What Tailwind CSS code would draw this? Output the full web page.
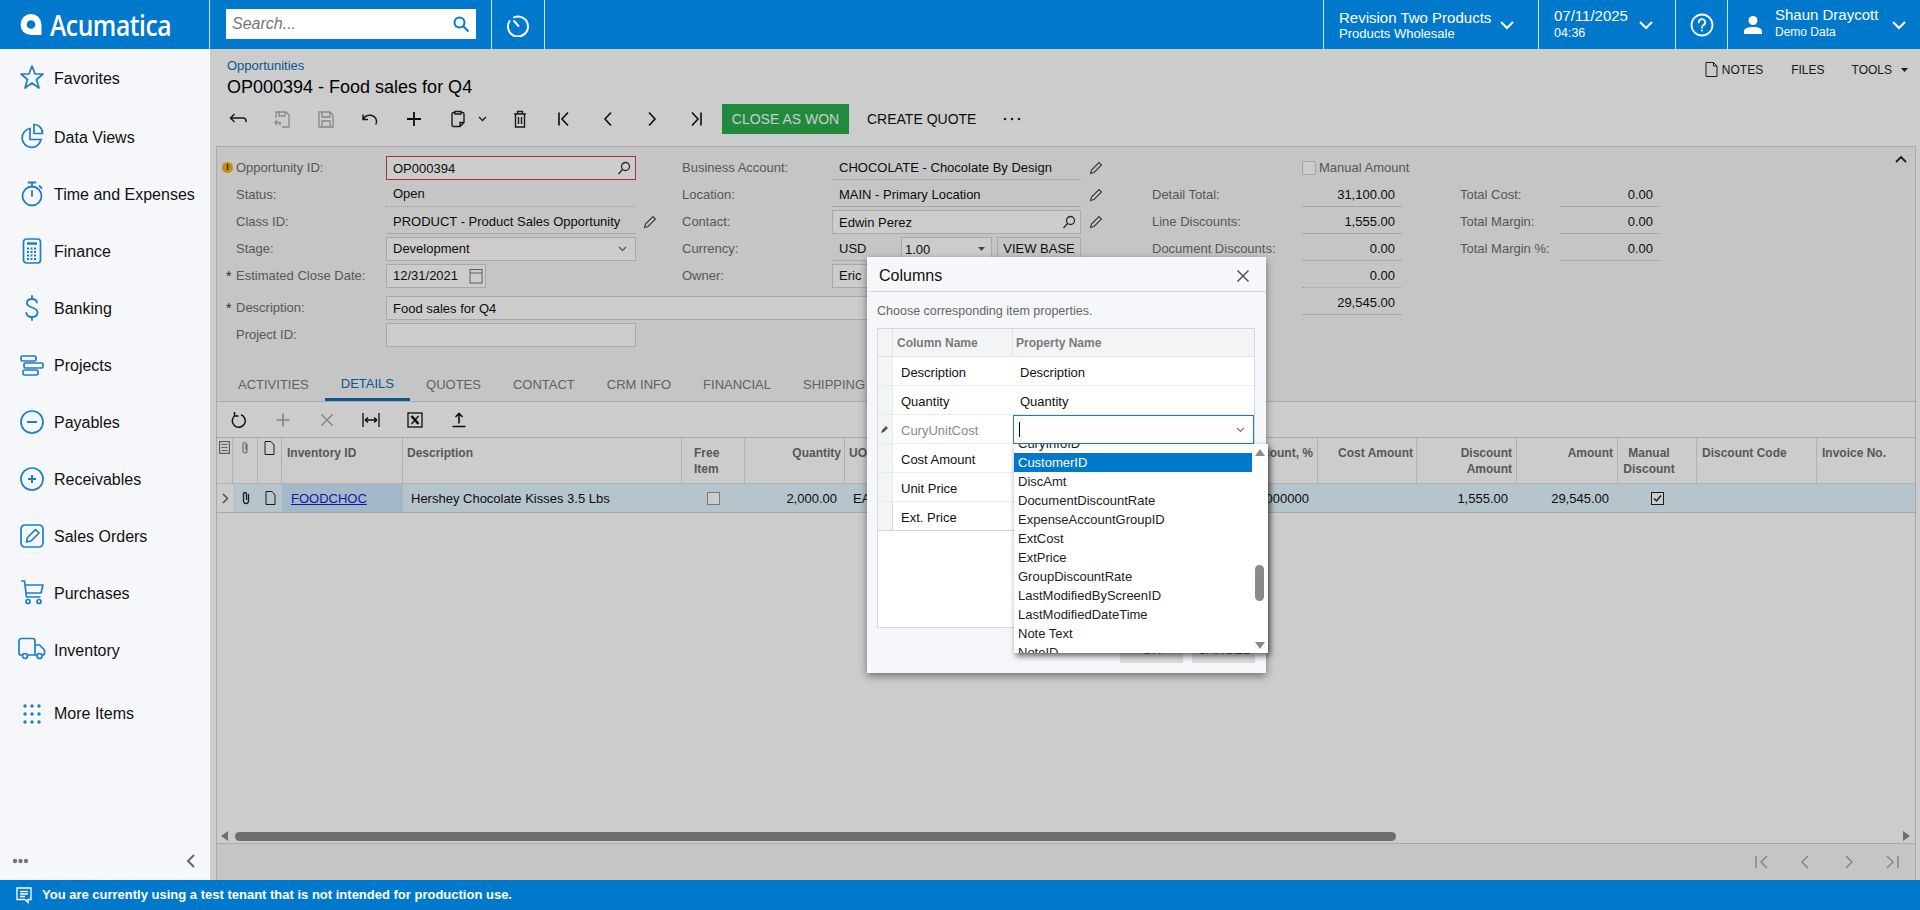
<!DOCTYPE html>
<html lang="en">
<head>
    <meta charset="UTF-8">
    <title>OP000394 - Food sales for Q4</title>
    <script src="https://cdn.jsdelivr.net/npm/@tailwindcss/browser@4"></script>
</head>
<body class="font-['Liberation_Sans',Arial,sans-serif] text-[#111]">
<div class="flex h-[910px] w-[1920px] flex-col overflow-hidden bg-white">

    <!-- top bar -->
    <header class="flex h-[49px] shrink-0 items-stretch bg-[#0079cc] text-white">
        <div class="flex w-[210px] items-center border-r border-white/80 pl-[20px]">
            <svg class="h-[23px] w-[22px]" viewBox="0 0 22 23"><path fill="#fff" fill-rule="evenodd" d="M11 1a10.500 10.500 0 0 1 10.500 10.500V22H11A10.500 10.500 0 0 1 11 1zm0 6.200a4.300 4.300 0 1 0 0 8.600 4.300 4.300 0 0 0 0-8.600z"/></svg>
            <span class="ml-[8px] origin-left scale-x-[.88] font-['Open_Sans',sans-serif] text-[28px] font-semibold tracking-[-0.5px]">Acumatica</span>
        </div>
        <div class="flex w-[282px] items-center border-r border-white/80 pl-[16px]">
            <div class="-mt-[1px] flex h-[30px] w-[250px] items-center justify-between bg-white pl-[6px] pr-[6px]">
                <span class="text-[16px] italic text-[#777]">Search...</span>
                <svg class="h-[18px] w-[18px]" viewBox="0 0 18 18" fill="none" stroke="#0079cc" stroke-width="2"><circle cx="7.500" cy="7.500" r="5"/><path d="M11.500 11.500l5 5"/></svg>
            </div>
        </div>
        <div class="flex w-[53px] items-center justify-center border-r border-white/80">
            <svg class="h-[24px] w-[24px]" viewBox="0 0 24 24" fill="none" stroke="#fff" stroke-width="2" stroke-linecap="round"><path d="M8 4.300A10 10 0 1 1 3.600 8"/><path d="M8 8l4.500 5"/></svg>
        </div>
        <div class="flex-1"></div>
        <div class="flex w-[216px] items-center border-x border-white/80 pl-[15px]">
            <div class="w-[160px]">
                <div class="text-[15px] leading-[17px]">Revision Two Products</div>
                <div class="text-[13px] leading-[15px]">Products Wholesale</div>
            </div>
            <svg class="h-[14px] w-[16px]" viewBox="0 0 16 14" fill="none" stroke="#fff" stroke-width="2.200"><path d="M2 4l6 6 6-6"/></svg>
        </div>
        <div class="flex w-[136px] items-center pl-[15px]">
            <div class="w-[84px]">
                <div class="text-[15px] leading-[18px]">07/11/2025</div>
                <div class="text-[12.500px] leading-[17px]">04:36</div>
            </div>
            <svg class="h-[14px] w-[16px]" viewBox="0 0 16 14" fill="none" stroke="#fff" stroke-width="2.200"><path d="M2 4l6 6 6-6"/></svg>
        </div>
        <div class="flex w-[53px] items-center justify-center border-x border-white/80">
            <svg class="h-[24px] w-[24px]" viewBox="0 0 24 24" fill="none" stroke="#fff" stroke-width="1.800"><circle cx="12" cy="12" r="10.500"/><path d="M8.800 9.300a3.200 3.200 0 1 1 4.700 2.800c-1 .6-1.500 1.200-1.500 2.600" stroke-linecap="round"/><circle cx="12" cy="17.500" r="1" fill="#fff" stroke="none"/></svg>
        </div>
        <div class="flex w-[192px] items-center pl-[15px]">
            <svg class="h-[20px] w-[20px]" viewBox="0 0 20 20" fill="#fff"><circle cx="10" cy="5.500" r="4.500"/><path d="M1 19v-2.500c0-3 3-4.500 9-4.500s9 1.500 9 4.500V19z"/></svg>
            <div class="ml-[12px] w-[116px]">
                <div class="-mt-[3px] text-[15px] leading-[17px]">Shaun Draycott</div>
                <div class="mt-[2px] text-[12px] leading-[15px]">Demo Data</div>
            </div>
            <svg class="h-[14px] w-[16px]" viewBox="0 0 16 14" fill="none" stroke="#fff" stroke-width="2.200"><path d="M2 4l6 6 6-6"/></svg>
        </div>
    </header>

    <div class="flex min-h-0 flex-1">
        <!-- side menu -->
        <nav class="relative w-[210px] shrink-0 bg-[#f5f7fa] text-[16px]">
            <div class="mt-[1px] flex h-[57px] items-center pl-[20px]">
                <svg class="-mt-[4px] h-[26px] w-[24px]" viewBox="0 0 24 26" fill="none" stroke="#1c7fc6" stroke-width="1.700" stroke-linejoin="round"><path d="M12 2l3 8h8l-6.500 5.500L19 24l-7-5-7 5 2.500-8.500L1 10h8z"/></svg>
                <span class="ml-[10px]">Favorites</span>
            </div>
            <div class="mt-[2px] flex h-[57px] items-center pl-[20px]">
                <svg class="-mt-[4px] h-[26px] w-[24px]" viewBox="0 0 24 26" fill="none" stroke="#1c7fc6" stroke-width="1.700"><path d="M10 5.500a9.500 9.500 0 1 0 11 11H10z"/><path d="M14 1.500a8.500 8.500 0 0 1 8.500 9H14z"/></svg>
                <span class="ml-[10px]">Data Views</span>
            </div>
            <div class="flex h-[57px] items-center pl-[20px]">
                <svg class="-mt-[2px] h-[26px] w-[24px]" viewBox="0 0 24 26" fill="none" stroke="#1c7fc6" stroke-width="1.800" stroke-linecap="round"><circle cx="12" cy="15" r="9.500"/><path d="M12 10v5M8.500 1.500h7M12 1.500v4M19.500 5l2 2"/></svg>
                <span class="ml-[10px]">Time and Expenses</span>
            </div>
            <div class="flex h-[57px] items-center pl-[20px]">
                <svg class="-mt-[2px] h-[26px] w-[24px]" viewBox="0 0 24 26" fill="none" stroke="#1c7fc6" stroke-width="1.700"><rect x="3.500" y="1" width="17" height="24" rx="3"/><path d="M7 5.500h10" stroke-width="2.500"/><path d="M7 10.500h2m1.500 0h2m1.500 0h2M7 14h2m1.500 0h2m1.500 0h2M7 17.500h2m1.500 0h2m1.500 0h2M7 21h2m1.500 0h2m1.500 0h2" stroke-width="2"/></svg>
                <span class="ml-[10px]">Finance</span>
            </div>
            <div class="flex h-[57px] items-center pl-[20px]">
                <svg class="-mt-[2px] h-[26px] w-[24px]" viewBox="0 0 24 26" fill="none" stroke="#1c7fc6" stroke-width="1.800" stroke-linecap="round"><path d="M17 7.500C16.500 5 14.500 4 12 4S7 5.300 7 8s2.500 3.700 5 4.500 5.500 2 5.500 5-2.500 4.500-5.500 4.500-5.200-1.200-5.700-4M12 1v3M12 22v3"/></svg>
                <span class="ml-[10px]">Banking</span>
            </div>
            <div class="flex h-[57px] items-center pl-[20px]">
                <svg class="-mt-[2px] h-[26px] w-[24px]" viewBox="0 0 24 26" fill="none" stroke="#1c7fc6" stroke-width="1.700"><rect x="1" y="4" width="15" height="5" rx="1.500"/><rect x="4" y="11" width="19" height="5" rx="1.500"/><rect x="3" y="18" width="15" height="5" rx="1.500"/></svg>
                <span class="ml-[10px]">Projects</span>
            </div>
            <div class="flex h-[57px] items-center pl-[20px]">
                <svg class="-mt-[2px] h-[26px] w-[24px]" viewBox="0 0 24 26" fill="none" stroke="#1c7fc6" stroke-width="1.700"><circle cx="12" cy="13" r="11"/><path d="M7 13h10" stroke-width="2"/></svg>
                <span class="ml-[10px]">Payables</span>
            </div>
            <div class="flex h-[57px] items-center pl-[20px]">
                <svg class="-mt-[2px] h-[26px] w-[24px]" viewBox="0 0 24 26" fill="none" stroke="#1c7fc6" stroke-width="1.700"><circle cx="12" cy="13" r="11"/><path d="M8 13h8M12 9v8" stroke-width="2"/></svg>
                <span class="ml-[10px]">Receivables</span>
            </div>
            <div class="flex h-[57px] items-center pl-[20px]">
                <svg class="-mt-[2px] h-[26px] w-[24px]" viewBox="0 0 24 26" fill="none" stroke="#1c7fc6" stroke-width="1.700"><rect x="1" y="2" width="22" height="22" rx="4"/><path d="M6.500 19l1-4.500L15.500 6.500l3.500 3.500-8 8z" stroke-linejoin="round"/></svg>
                <span class="ml-[10px]">Sales Orders</span>
            </div>
            <div class="flex h-[57px] items-center pl-[20px]">
                <svg class="-mt-[4px] h-[26px] w-[24px]" viewBox="0 0 24 26" fill="none" stroke="#1c7fc6" stroke-width="1.700" stroke-linejoin="round"><path d="M1 2h3.500l2 16h14M5 6h18l-2 8H6"/><circle cx="8" cy="22.500" r="2"/><circle cx="19" cy="22.500" r="2"/></svg>
                <span class="ml-[10px]">Purchases</span>
            </div>
            <div class="flex h-[57px] items-center pl-[18px]">
                <svg class="-mt-[4px] h-[24px] w-[28px]" viewBox="0 0 28 24" fill="none" stroke="#1c7fc6" stroke-width="1.700" stroke-linejoin="round"><path d="M4.500 18H3a2 2 0 0 1-2-2V4a2.500 2.500 0 0 1 2.500-2.500h11A2.500 2.500 0 0 1 17 4v14h-7M17 8h4.500l5 5v3a2 2 0 0 1-2 2H24M17 18h2"/><circle cx="7" cy="19" r="2.500"/><circle cx="21.500" cy="19" r="2.500"/></svg>
                <span class="ml-[8px]">Inventory</span>
            </div>
            <div class="mt-[6px] flex h-[57px] items-center pl-[20px]">
                <svg class="h-[22px] w-[24px]" viewBox="0 0 24 22" fill="#1c7fc6"><circle cx="5" cy="3" r="1.700"/><circle cx="12" cy="3" r="1.700"/><circle cx="19" cy="3" r="1.700"/><circle cx="5" cy="11" r="1.700"/><circle cx="12" cy="11" r="1.700"/><circle cx="19" cy="11" r="1.700"/><circle cx="5" cy="19" r="1.700"/><circle cx="12" cy="19" r="1.700"/><circle cx="19" cy="19" r="1.700"/></svg>
                <span class="ml-[10px]">More Items</span>
            </div>
            <div class="absolute inset-x-0 bottom-[12px] flex items-center justify-between pl-[12px] pr-[14px]">
                <svg class="h-[6px] w-[17px]" viewBox="0 0 17 6" fill="#777"><circle cx="3" cy="3" r="2.200"/><circle cx="8.500" cy="3" r="2.200"/><circle cx="14" cy="3" r="2.200"/></svg>
                <svg class="h-[14px] w-[10px]" viewBox="0 0 10 14" fill="none" stroke="#666" stroke-width="2"><path d="M8 1L2 7l6 6"/></svg>
            </div>
        </nav>

        <!-- page -->
        <main class="relative flex min-w-0 flex-1 flex-col bg-white">
            <div class="flex h-[55px] shrink-0 justify-between pl-[17px] pr-[12px]">
                <div class="pt-[10px]">
                    <div class="text-[13px] leading-[14px] text-[#0b6fb3]">Opportunities</div>
                    <div class="mt-[3px] text-[18px] leading-[22px] text-black">OP000394 - Food sales for Q4</div>
                </div>
                <div class="flex h-[40px] items-center pt-[1px] text-[12px] text-[#222]">
                    <svg class="mr-[4px] h-[15px] w-[13px]" viewBox="0 0 13 15" fill="none" stroke="#222"><path d="M1 .5h7.500L12 4v10.500H1zM8.500 .5V4H12"/></svg>
                    <span>NOTES</span>
                    <span class="ml-[28px]">FILES</span>
                    <span class="ml-[27px]">TOOLS</span>
                    <svg class="ml-[9px] h-[4px] w-[7px]" viewBox="0 0 7 4" fill="#222"><path d="M0 0h7L3.500 4z"/></svg>
                </div>
            </div>

            <!-- main toolbar -->
            <div class="ml-[6px] flex h-[30px] shrink-0 items-center">
                <div class="flex w-[44px] justify-center"><svg class="h-[20px] w-[20px]" viewBox="0 0 20 20" fill="none" stroke="#222" stroke-width="1.500"><path d="M6.500 5L2.500 9l4 4M2.500 9H15a3 3 0 0 1 3 3v1"/></svg></div>
                <div class="flex w-[44px] justify-center"><svg class="h-[20px] w-[20px]" viewBox="0 0 20 20" fill="none" stroke="#aaa" stroke-width="1.300"><path d="M4 9V3h10l3 3v12h-7M7 3v4h6V3M5 11l-2 2.500L5 16M3 13.500h5v3"/></svg></div>
                <div class="flex w-[44px] justify-center"><svg class="h-[20px] w-[20px]" viewBox="0 0 20 20" fill="none" stroke="#aaa" stroke-width="1.300"><path d="M3 3h11l3 3v12H3zM6 3v5h8V3M6 18v-6h8v6"/></svg></div>
                <div class="flex w-[44px] justify-center"><svg class="h-[20px] w-[20px]" viewBox="0 0 20 20" fill="none" stroke="#222" stroke-width="1.500"><path d="M3 5.500v5h5M3.500 10a7 7 0 0 1 13 1.500c.3 1.500 0 2.500-.8 4"/></svg></div>
                <div class="flex w-[44px] justify-center"><svg class="h-[20px] w-[20px]" viewBox="0 0 20 20" fill="none" stroke="#111" stroke-width="1.800"><path d="M10 3v14M3 10h14"/></svg></div>
                <div class="flex w-[44px] justify-center"><svg class="h-[20px] w-[20px]" viewBox="0 0 20 20" fill="none" stroke="#222" stroke-width="1.400"><path d="M7 3.500H5.500a1.500 1.500 0 0 0-1.500 1.500v11a1.500 1.500 0 0 0 1.500 1.500H12l4-4V5a1.500 1.500 0 0 0-1.500-1.500H13M7 2.500h6v2.500H7zM12 17.500v-4h4"/></svg></div>
                <div class="flex w-[18px] justify-start"><svg class="-ml-[2px] h-[6px] w-[9px]" viewBox="0 0 9 6" fill="none" stroke="#222" stroke-width="1.300"><path d="M1 1l3.500 3.500L8 1"/></svg></div>
                <div class="flex w-[44px] justify-center"><svg class="h-[20px] w-[20px]" viewBox="0 0 20 20" fill="none" stroke="#222" stroke-width="1.400"><path d="M4 5h12M7.500 5V2.500h5V5M5.500 5v13h9V5M8.500 8v7M11.500 8v7"/></svg></div>
                <div class="flex w-[44px] justify-center"><svg class="h-[20px] w-[20px]" viewBox="0 0 20 20" fill="none" stroke="#111" stroke-width="1.600"><path d="M5 3.500v13M14 3.500L8 10l6 6.500"/></svg></div>
                <div class="flex w-[44px] justify-center"><svg class="h-[20px] w-[20px]" viewBox="0 0 20 20" fill="none" stroke="#111" stroke-width="1.600"><path d="M13 3.500L7 10l6 6.500"/></svg></div>
                <div class="flex w-[44px] justify-center"><svg class="h-[20px] w-[20px]" viewBox="0 0 20 20" fill="none" stroke="#111" stroke-width="1.600"><path d="M7 3.500l6 6.500-6 6.500"/></svg></div>
                <div class="flex w-[44px] justify-center"><svg class="h-[20px] w-[20px]" viewBox="0 0 20 20" fill="none" stroke="#111" stroke-width="1.600"><path d="M15 3.500v13M6 3.500l6 6.500-6 6.500"/></svg></div>
                <div class="ml-[4px] flex h-[30px] w-[127px] items-center justify-center bg-[#29ad4e] text-[14px] text-white">CLOSE AS WON</div>
                <div class="ml-[18px] text-[14px] text-[#111]">CREATE QUOTE</div>
                <svg class="ml-[27px] h-[4px] w-[18px]" viewBox="0 0 18 4" fill="#222"><circle cx="2" cy="2" r="1.300"/><circle cx="9" cy="2" r="1.300"/><circle cx="16" cy="2" r="1.300"/></svg>
            </div>

            <div class="ml-[6px] mr-[4px] mt-[12px] flex min-h-0 flex-1 flex-col border-x border-[#d4d4d4]">
                <!-- form -->
                <section class="relative flex h-[256px] shrink-0 border-t border-b border-[#d4d4d4] bg-[#f5f7f6] pt-[7px] text-[13px]">
                    <svg class="absolute right-[8px] top-[8px] h-[8px] w-[12px]" viewBox="0 0 12 8" fill="none" stroke="#222" stroke-width="1.800"><path d="M1 7l5-5 5 5"/></svg>
                    <div class="w-[935px] shrink-0">
                        <div class="flex">
                            <div class="w-[465px] shrink-0">
                                <div class="relative flex h-[27px] items-center pl-[19px]">
                                    <span class="absolute left-[5px] flex h-[11px] w-[11px] items-center justify-center rounded-full bg-[#efb11a] text-[9px] font-bold leading-none text-[#222]">!</span>
                                    <span class="w-[150px] text-[#6e6e6e]">Opportunity ID:</span>
                                    <div class="flex h-[24px] w-[250px] items-center justify-between border border-[#c94040] bg-white pl-[6px] pr-[4px]"><span class="mt-[2px]">OP000394</span><svg class="h-[14px] w-[14px]" viewBox="0 0 14 14" fill="none" stroke="#333" stroke-width="1.300"><circle cx="8.500" cy="5.500" r="4"/><path d="M5.500 8.500L1.500 13"/></svg></div>
                                </div>
                                <div class="flex h-[27px] items-center pl-[19px]">
                                    <span class="w-[150px] text-[#6e6e6e]">Status:</span>
                                    <div class="flex h-[24px] w-[250px] items-center border-b border-dotted border-[#c8c8c8] pl-[7px]">Open</div>
                                </div>
                                <div class="flex h-[27px] items-center pl-[19px]">
                                    <span class="w-[150px] text-[#6e6e6e]">Class ID:</span>
                                    <div class="flex h-[24px] w-[250px] items-center border-b border-[#d4d4d4] pl-[7px] pt-[2px]">PRODUCT - Product Sales Opportunity</div>
                                    <svg class="ml-[7px] h-[14px] w-[14px]" viewBox="0 0 14 14" fill="none" stroke="#444" stroke-width="1.100"><path d="M1.500 12.500l1-3.500L10 1.500l2.500 2.500L5 11.500z"/></svg>
                                </div>
                                <div class="flex h-[27px] items-center pl-[19px]">
                                    <span class="w-[150px] text-[#6e6e6e]">Stage:</span>
                                    <div class="flex h-[24px] w-[250px] items-center justify-between border border-[#d4d4d4] bg-white pl-[6px] pr-[8px]"><span class="mt-[1px]">Development</span><svg class="h-[6px] w-[9px]" viewBox="0 0 9 6" fill="none" stroke="#666" stroke-width="1.200"><path d="M1 1l3.500 3.500L8 1"/></svg></div>
                                </div>
                                <div class="relative flex h-[27px] items-center pl-[19px]">
                                    <span class="absolute left-[9px] top-[7px] text-[14px] leading-none text-[#333]">*</span>
                                    <span class="w-[150px] text-[#6e6e6e]">Estimated Close Date:</span>
                                    <div class="flex h-[24px] w-[100px] items-center justify-between border border-[#d4d4d4] bg-white pl-[6px] pr-[2px]"><span class="mt-[1px]">12/31/2021</span><svg class="h-[16px] w-[14px]" viewBox="0 0 14 16" fill="none" stroke="#777"><rect x="1" y="1.500" width="12" height="13.500"/><path d="M1 5h12"/></svg></div>
                                </div>
                            </div>
                            <div class="w-[470px] shrink-0">
                                <div class="flex h-[27px] items-center">
                                    <span class="w-[150px] text-[#6e6e6e]">Business Account:</span>
                                    <div class="flex h-[24px] w-[249px] items-center border-b border-[#d4d4d4] pl-[7px] pt-[2px]">CHOCOLATE - Chocolate By Design</div>
                                    <svg class="ml-[8px] h-[14px] w-[14px]" viewBox="0 0 14 14" fill="none" stroke="#444" stroke-width="1.100"><path d="M1.500 12.500l1-3.500L10 1.500l2.500 2.500L5 11.500z"/></svg>
                                </div>
                                <div class="flex h-[27px] items-center">
                                    <span class="w-[150px] text-[#6e6e6e]">Location:</span>
                                    <div class="flex h-[24px] w-[249px] items-center border-b border-[#d4d4d4] pl-[7px] pt-[2px]">MAIN - Primary Location</div>
                                    <svg class="ml-[8px] h-[14px] w-[14px]" viewBox="0 0 14 14" fill="none" stroke="#444" stroke-width="1.100"><path d="M1.500 12.500l1-3.500L10 1.500l2.500 2.500L5 11.500z"/></svg>
                                </div>
                                <div class="flex h-[27px] items-center">
                                    <span class="w-[150px] text-[#6e6e6e]">Contact:</span>
                                    <div class="flex h-[24px] w-[249px] items-center justify-between border border-[#d4d4d4] bg-white pl-[6px] pr-[4px]"><span class="mt-[2px]">Edwin Perez</span><svg class="h-[14px] w-[14px]" viewBox="0 0 14 14" fill="none" stroke="#333" stroke-width="1.300"><circle cx="8.500" cy="5.500" r="4"/><path d="M5.500 8.500L1.500 13"/></svg></div>
                                    <svg class="ml-[8px] h-[14px] w-[14px]" viewBox="0 0 14 14" fill="none" stroke="#444" stroke-width="1.100"><path d="M1.500 12.500l1-3.500L10 1.500l2.500 2.500L5 11.500z"/></svg>
                                </div>
                                <div class="flex h-[27px] items-center">
                                    <span class="w-[150px] text-[#6e6e6e]">Currency:</span>
                                    <div class="flex h-[24px] w-[65px] items-center border-b border-[#d4d4d4] pl-[7px] pt-[2px]">USD</div>
                                    <div class="ml-[4px] flex h-[24px] w-[91px] items-center justify-between border border-[#d4d4d4] bg-white pl-[3px] pr-[6px]"><span class="mt-[2px]">1.00</span><svg class="h-[4px] w-[7px]" viewBox="0 0 7 4" fill="#555"><path d="M0 0h7L3.500 4z"/></svg></div>
                                    <div class="ml-[5px] flex h-[24px] w-[84px] items-center justify-center border border-[#d4d4d4] bg-[#f5f7f6] pt-[1px]">VIEW BASE</div>
                                </div>
                                <div class="flex h-[27px] items-center">
                                    <span class="w-[150px] text-[#6e6e6e]">Owner:</span>
                                    <div class="flex h-[24px] w-[249px] items-center border border-[#d4d4d4] bg-white pl-[6px]">Eric</div>
                                </div>
                            </div>
                        </div>
                        <div class="relative mt-[5px] flex h-[27px] items-center pl-[19px]">
                            <span class="absolute left-[9px] top-[7px] text-[14px] leading-none text-[#333]">*</span>
                            <span class="w-[150px] text-[#6e6e6e]">Description:</span>
                            <div class="flex h-[24px] w-[695px] items-center border border-[#d4d4d4] bg-white pl-[6px] pt-[2px]">Food sales for Q4</div>
                        </div>
                        <div class="flex h-[27px] items-center pl-[19px]">
                            <span class="w-[150px] text-[#6e6e6e]">Project ID:</span>
                            <div class="h-[24px] w-[250px] border border-[#d4d4d4] bg-white"></div>
                        </div>
                    </div>
                    <div class="w-[308px] shrink-0">
                        <div class="flex h-[27px] items-center pl-[150px] text-[#6e6e6e]">
                            <span class="mr-[3px] h-[14px] w-[14px] rounded-[2px] border border-[#cfcfcf] bg-white"></span>Manual Amount
                        </div>
                        <div class="flex h-[27px] items-center"><span class="w-[150px] text-[#6e6e6e]">Detail Total:</span><div class="flex h-[24px] w-[100px] items-center justify-end border-b border-[#d4d4d4] pr-[7px] pt-[2px]">31,100.00</div></div>
                        <div class="flex h-[27px] items-center"><span class="w-[150px] text-[#6e6e6e]">Line Discounts:</span><div class="flex h-[24px] w-[100px] items-center justify-end border-b border-[#d4d4d4] pr-[7px] pt-[2px]">1,555.00</div></div>
                        <div class="flex h-[27px] items-center"><span class="w-[150px] text-[#6e6e6e]">Document Discounts:</span><div class="flex h-[24px] w-[100px] items-center justify-end border-b border-[#d4d4d4] pr-[7px] pt-[2px]">0.00</div></div>
                        <div class="flex h-[27px] items-center"><span class="w-[150px] text-[#6e6e6e]">Discount Total:</span><div class="flex h-[24px] w-[100px] items-center justify-end border-b border-dotted border-[#c8c8c8] pr-[7px] pt-[2px]">0.00</div></div>
                        <div class="flex h-[27px] items-center"><span class="w-[150px] text-[#6e6e6e]">Amount:</span><div class="flex h-[24px] w-[100px] items-center justify-end border-b border-[#d4d4d4] pr-[7px] pt-[2px]">29,545.00</div></div>
                    </div>
                    <div class="pt-[27px]">
                        <div class="flex h-[27px] items-center"><span class="w-[100px] text-[#6e6e6e]">Total Cost:</span><div class="flex h-[24px] w-[100px] items-center justify-end border-b border-[#d4d4d4] pr-[7px] pt-[2px]">0.00</div></div>
                        <div class="flex h-[27px] items-center"><span class="w-[100px] text-[#6e6e6e]">Total Margin:</span><div class="flex h-[24px] w-[100px] items-center justify-end border-b border-[#d4d4d4] pr-[7px] pt-[2px]">0.00</div></div>
                        <div class="flex h-[27px] items-center"><span class="w-[100px] text-[#6e6e6e]">Total Margin %:</span><div class="flex h-[24px] w-[100px] items-center justify-end border-b border-[#d4d4d4] pr-[7px] pt-[2px]">0.00</div></div>
                    </div>
                    <!-- tabs sit at the foot of the form panel -->
                    <div class="absolute inset-x-0 bottom-0 flex h-[41px] items-start text-[13px] text-[#7a7a7a]">
                        <span class="ml-[21px] mt-[15px]">ACTIVITIES</span>
                        <span class="relative ml-[32px] mt-[14px] text-[#0b6fb3]">DETAILS<span class="absolute -left-[16px] -right-[16px] top-[24px] h-[3px] bg-[#0b6fb3]"></span></span>
                        <span class="ml-[32px] mt-[15px]">QUOTES</span>
                        <span class="ml-[32px] mt-[15px]">CONTACT</span>
                        <span class="ml-[32px] mt-[15px]">CRM INFO</span>
                        <span class="ml-[32px] mt-[15px]">FINANCIAL</span>
                        <span class="ml-[32px] mt-[15px]">SHIPPING</span>
                    </div>
                </section>

                <!-- grid toolbar -->
                <div class="flex h-[36px] shrink-0 items-center border-b border-[#d4d4d4]">
                    <div class="flex w-[44px] justify-center"><svg class="h-[18px] w-[18px]" viewBox="0 0 18 18" fill="none" stroke="#111" stroke-width="1.500"><path d="M5 4.500a6.500 6.500 0 1 0 6-.8M4.500 1v4h4"/></svg></div>
                    <div class="flex w-[44px] justify-center"><svg class="h-[18px] w-[18px]" viewBox="0 0 18 18" fill="none" stroke="#a8a8a8" stroke-width="1.700"><path d="M9 2.500v13M2.500 9h13"/></svg></div>
                    <div class="flex w-[44px] justify-center"><svg class="h-[18px] w-[18px]" viewBox="0 0 18 18" fill="none" stroke="#a8a8a8" stroke-width="1.500"><path d="M3.500 3.500l11 11M14.500 3.500l-11 11"/></svg></div>
                    <div class="flex w-[44px] justify-center"><svg class="h-[18px] w-[18px]" viewBox="0 0 18 18" fill="none" stroke="#111" stroke-width="1.300"><path d="M1 2v14M17 2v14M3 9h12M3 9l3-2.500M3 9l3 2.500M15 9l-3-2.500M15 9l-3 2.500"/></svg></div>
                    <div class="flex w-[44px] justify-center"><svg class="h-[18px] w-[18px]" viewBox="0 0 18 18" fill="none" stroke="#111" stroke-width="1.300"><rect x="2" y="2" width="14" height="14"/><path d="M5.500 5l7 8" stroke-width="2.600"/><path d="M12.500 5l-7 8"/></svg></div>
                    <div class="flex w-[44px] justify-center"><svg class="h-[18px] w-[18px]" viewBox="0 0 18 18" fill="none" stroke="#111" stroke-width="1.600"><path d="M9 12.500V2.500M5.500 6L9 2.500 12.500 6M2.500 15.500h13"/></svg></div>
                </div>

                <!-- grid -->
                <div class="grid shrink-0 grid-cols-[16px_25px_24px_121px_279px_63px_100px_55px_100px_118px_100px_100px_99px_100px_101px_79px_120px_98px] text-[12px] font-bold text-[#6e6e6e]">
                    <div class="flex h-[46px] justify-center border-r border-b border-[#dedede] pt-[3px]"><svg class="h-[13px] w-[11px]" viewBox="0 0 11 13" fill="none" stroke="#777" stroke-width="1.200"><rect x=".6" y=".6" width="9.800" height="11.800"/><path d="M2.500 3.500h6M2.500 6.500h6M2.500 9.500h6"/></svg></div>
                    <div class="flex h-[46px] justify-center border-r border-b border-[#dedede] pt-[3px]"><svg class="h-[14px] w-[10px]" viewBox="0 0 10 14" fill="none" stroke="#888" stroke-width="1.200"><path d="M7 3v7a2 2 0 0 1-4 0V3a1.500 1.500 0 0 1 3 0v6"/></svg></div>
                    <div class="flex h-[46px] justify-center border-r border-b border-[#dedede] pt-[3px]"><svg class="h-[14px] w-[11px]" viewBox="0 0 11 14" fill="none" stroke="#222"><path d="M1 .5h6L10 4v9.500H1z"/></svg></div>
                    <div class="h-[46px] border-r border-b border-[#dedede] pl-[5px] pt-[6px]">Inventory ID</div>
                    <div class="h-[46px] border-r border-b border-[#dedede] pl-[4px] pt-[6px]">Description</div>
                    <div class="h-[46px] border-r border-b border-[#dedede] pl-[12px] pt-[7px] leading-[16px]">Free<br>Item</div>
                    <div class="h-[46px] border-r border-b border-[#dedede] pr-[3px] pt-[6px] text-right">Quantity</div>
                    <div class="h-[46px] border-r border-b border-[#dedede] pl-[4px] pt-[6px]">UOM</div>
                    <div class="h-[46px] border-r border-b border-[#dedede] pr-[4px] pt-[6px] text-right">Unit Price</div>
                    <div class="h-[46px] border-r border-b border-[#dedede] pr-[4px] pt-[6px] text-right">Ext. Price</div>
                    <div class="h-[46px] border-r border-b border-[#dedede] pr-[4px] pt-[6px] text-right">Ext. Cost</div>
                    <div class="h-[46px] border-r border-b border-[#dedede] pr-[4px] pt-[6px] text-right">Discount, %</div>
                    <div class="h-[46px] border-r border-b border-[#dedede] pr-[3px] pt-[6px] text-right">Cost Amount</div>
                    <div class="h-[46px] border-r border-b border-[#dedede] pr-[4px] pt-[7px] text-right leading-[16px]">Discount<br>Amount</div>
                    <div class="h-[46px] border-r border-b border-[#dedede] pr-[4px] pt-[6px] text-right">Amount</div>
                    <div class="h-[46px] border-r border-b border-[#dedede] pr-[16px] pt-[7px] text-center leading-[16px]">Manual<br>Discount</div>
                    <div class="h-[46px] border-r border-b border-[#dedede] pl-[5px] pt-[6px]">Discount Code</div>
                    <div class="h-[46px] border-b border-[#dedede] pl-[5px] pt-[6px]">Invoice No.</div>

                    <div class="flex h-[29px] items-center justify-center border-b border-[#d4d4d4] bg-white"><svg class="h-[11px] w-[7px]" viewBox="0 0 7 11" fill="none" stroke="#666" stroke-width="1.500"><path d="M1 1l4.500 4.500L1 10"/></svg></div>
                    <div class="flex h-[29px] items-center justify-center border-b border-[#d4d4d4] bg-[#e4f5ff]"><svg class="h-[14px] w-[10px]" viewBox="0 0 10 14" fill="none" stroke="#222" stroke-width="1.300"><path d="M7.500 3v7a2.500 2.500 0 0 1-5 0V3a1.500 1.500 0 0 1 3 0v6"/></svg></div>
                    <div class="flex h-[29px] items-center justify-center border-b border-[#d4d4d4] bg-[#e4f5ff]"><svg class="h-[14px] w-[11px]" viewBox="0 0 11 14" fill="none" stroke="#222"><path d="M1 .5h6L10 4v9.500H1z"/></svg></div>
                    <div class="flex h-[29px] items-center border-b border-[#d4d4d4] bg-[#cde8fb] pl-[9px] pt-[2px] text-[13px] font-normal text-[#1a1ad6] underline">FOODCHOC</div>
                    <div class="flex h-[29px] items-center border-b border-[#d4d4d4] bg-[#e4f5ff] pl-[8px] pt-[2px] text-[13px] font-normal text-[#111]">Hershey Chocolate Kisses 3.5 Lbs</div>
                    <div class="flex h-[29px] items-center justify-center border-b border-[#d4d4d4] bg-[#e4f5ff]"><span class="h-[13px] w-[13px] border border-[#999] bg-white"></span></div>
                    <div class="flex h-[29px] items-center justify-end border-b border-[#d4d4d4] bg-[#e4f5ff] pr-[8px] pt-[2px] text-[13px] font-normal text-[#111]">2,000.00</div>
                    <div class="flex h-[29px] items-center border-b border-[#d4d4d4] bg-[#e4f5ff] pl-[8px] pt-[2px] text-[13px] font-normal text-[#111]">EA</div>
                    <div class="h-[29px] border-b border-[#d4d4d4] bg-[#e4f5ff]"></div>
                    <div class="h-[29px] border-b border-[#d4d4d4] bg-[#e4f5ff]"></div>
                    <div class="h-[29px] border-b border-[#d4d4d4] bg-[#e4f5ff]"></div>
                    <div class="flex h-[29px] items-center justify-end border-b border-[#d4d4d4] bg-[#e4f5ff] pr-[9px] pt-[2px] text-[13px] font-normal text-[#111]">5.000000</div>
                    <div class="h-[29px] border-b border-[#d4d4d4] bg-[#e4f5ff]"></div>
                    <div class="flex h-[29px] items-center justify-end border-b border-[#d4d4d4] bg-[#e4f5ff] pr-[9px] pt-[2px] text-[13px] font-normal text-[#111]">1,555.00</div>
                    <div class="flex h-[29px] items-center justify-end border-b border-[#d4d4d4] bg-[#e4f5ff] pr-[9px] pt-[2px] text-[13px] font-normal text-[#111]">29,545.00</div>
                    <div class="flex h-[29px] items-center justify-center border-b border-[#d4d4d4] bg-[#e4f5ff]"><svg class="h-[13px] w-[13px]" viewBox="0 0 13 13" fill="#fff" stroke="#222"><rect x=".5" y=".5" width="12" height="12"/><path d="M3 6.500l2.500 2.500L10 3.500" fill="none" stroke-width="1.400"/></svg></div>
                    <div class="h-[29px] border-b border-[#d4d4d4] bg-[#e4f5ff]"></div>
                    <div class="h-[29px] border-b border-[#d4d4d4] bg-[#e4f5ff]"></div>
                </div>

                <div class="flex-1"></div>

                <!-- horizontal scrollbar -->
                <div class="flex h-[14px] shrink-0 items-center pl-[4px] pr-[5px]">
                    <svg class="h-[10px] w-[7px]" viewBox="0 0 7 10" fill="#8a8a8a"><path d="M7 0v10L0 5z"/></svg>
                    <div class="ml-[7px] h-[9px] w-[1161px] rounded-full bg-[#8a8a8a]"></div>
                    <div class="flex-1"></div>
                    <svg class="h-[10px] w-[7px]" viewBox="0 0 7 10" fill="#8a8a8a"><path d="M0 0v10l7-5z"/></svg>
                </div>

                <!-- pager -->
                <div class="flex h-[37px] shrink-0 items-center justify-end border-t border-[#d4d4d4] bg-[#f5f7f6]">
                    <svg class="h-[16px] w-[44px]" viewBox="0 0 44 16" fill="none" stroke="#a8a8a8" stroke-width="1.500"><path d="M17 2v12M28 2l-6 6 6 6"/></svg>
                    <svg class="h-[16px] w-[44px]" viewBox="0 0 44 16" fill="none" stroke="#a8a8a8" stroke-width="1.500"><path d="M25 2l-6 6 6 6"/></svg>
                    <svg class="h-[16px] w-[44px]" viewBox="0 0 44 16" fill="none" stroke="#a8a8a8" stroke-width="1.500"><path d="M19 2l6 6-6 6"/></svg>
                    <svg class="h-[16px] w-[44px]" viewBox="0 0 44 16" fill="none" stroke="#a8a8a8" stroke-width="1.500"><path d="M27 2v12M16 2l6 6-6 6"/></svg>
                </div>
            </div>

            <!-- dim layer behind the dialog -->
            <div class="absolute inset-0 z-10 bg-black/20"></div>

            <!-- Columns dialog -->
            <div class="absolute left-[657px] top-[208px] z-20 flex h-[416px] w-[399px] flex-col bg-[#f5f7fa] shadow-[0_3px_8px_rgba(0,0,0,.45)]">
                <div class="flex h-[35px] shrink-0 items-center justify-between border-b border-[#d5d8dc] pl-[12px] pr-[16px] pt-[4px]">
                    <span class="text-[16px] text-[#111]">Columns</span>
                    <svg class="h-[14px] w-[14px]" viewBox="0 0 14 14" fill="none" stroke="#555" stroke-width="1.500"><path d="M1.500 1.500l11 11M12.500 1.500l-11 11"/></svg>
                </div>
                <div class="shrink-0 pl-[10px] pt-[12px] text-[12.500px] leading-[14px] text-[#666]">Choose corresponding item properties.</div>
                <div class="ml-[10px] mt-[10px] h-[300px] w-[378px] border border-[#d5d8dc] bg-white text-[13px]">
                    <div class="grid grid-cols-[15px_120px_1fr]">
                        <div class="h-[28px] border-r border-b border-[#dfe2e6] bg-[#f3f4f6]"></div>
                        <div class="flex h-[28px] items-center border-r border-b border-[#dfe2e6] bg-[#f3f4f6] pl-[4px] text-[12px] font-bold text-[#7a7a7a]">Column Name</div>
                        <div class="flex h-[28px] items-center border-b border-[#dfe2e6] bg-[#f3f4f6] pl-[3px] text-[12px] font-bold text-[#7a7a7a]">Property Name</div>

                        <div class="h-[29px] border-r border-b border-[#e6eef5] bg-[#f3f4f6]"></div>
                        <div class="flex h-[29px] items-center border-b border-[#e6eef5] pl-[8px] pt-[3px]">Description</div>
                        <div class="flex h-[29px] items-center border-b border-[#e6eef5] pl-[7px] pt-[3px]">Description</div>

                        <div class="h-[29px] border-r border-b border-[#e6eef5] bg-[#f3f4f6]"></div>
                        <div class="flex h-[29px] items-center border-b border-[#e6eef5] pl-[8px] pt-[3px]">Quantity</div>
                        <div class="flex h-[29px] items-center border-b border-[#e6eef5] pl-[7px] pt-[3px]">Quantity</div>

                        <div class="flex h-[29px] items-center justify-center border-r border-b border-[#e6eef5] bg-[#f3f4f6]"><svg class="h-[8px] w-[8px]" viewBox="0 0 8 8" fill="#555"><path d="M0 8l1-3 4-4 2 2-4 4z"/></svg></div>
                        <div class="flex h-[29px] items-center border-b border-[#e6eef5] pl-[8px] pt-[3px] text-[#888]">CuryUnitCost</div>
                        <div class="flex h-[29px] items-center justify-between border border-[#1c7fc6] pl-[5px] pr-[8px]"><span class="h-[15px] w-px bg-black"></span><svg class="h-[6px] w-[9px]" viewBox="0 0 9 6" fill="none" stroke="#777" stroke-width="1.200"><path d="M1 1l3.500 3.500L8 1"/></svg></div>

                        <div class="h-[29px] border-r border-b border-[#e6eef5] bg-[#f3f4f6]"></div>
                        <div class="flex h-[29px] items-center border-b border-[#e6eef5] pl-[8px] pt-[3px]">Cost Amount</div>
                        <div class="h-[29px] border-b border-[#e6eef5]"></div>

                        <div class="h-[29px] border-r border-b border-[#e6eef5] bg-[#f3f4f6]"></div>
                        <div class="flex h-[29px] items-center border-b border-[#e6eef5] pl-[8px] pt-[3px]">Unit Price</div>
                        <div class="h-[29px] border-b border-[#e6eef5]"></div>

                        <div class="h-[29px] border-r border-b border-[#d5d8dc] bg-[#f3f4f6]"></div>
                        <div class="flex h-[29px] items-center border-b border-[#d5d8dc] pl-[8px] pt-[3px]">Ext. Price</div>
                        <div class="h-[29px] border-b border-[#d5d8dc]"></div>
                    </div>
                </div>
                <div class="ml-auto mr-[11px] mt-[12px] flex gap-[9px] text-[13px] text-[#555]">
                    <div class="flex h-[23px] w-[63px] items-center justify-center bg-[#dcdcdc] pb-[3px]">OK</div>
                    <div class="flex h-[23px] w-[63px] items-center justify-center bg-[#dcdcdc] pb-[3px]">CANCEL</div>
                </div>

                <!-- open drop-down list -->
                <div class="absolute left-[147px] top-[187px] flex h-[209px] w-[254px] overflow-hidden bg-white text-[13px] leading-[19px] text-[#222] shadow-[2px_3px_6px_rgba(0,0,0,.6)]">
                    <div class="-mt-[10px] w-[238px] shrink-0">
                        <div class="h-[19px] pl-[4px]">CuryInfoID</div>
                        <div class="h-[19px] bg-[#0079cc] pl-[4px] text-white">CustomerID</div>
                        <div class="h-[19px] pl-[4px]">DiscAmt</div>
                        <div class="h-[19px] pl-[4px]">DocumentDiscountRate</div>
                        <div class="h-[19px] pl-[4px]">ExpenseAccountGroupID</div>
                        <div class="h-[19px] pl-[4px]">ExtCost</div>
                        <div class="h-[19px] pl-[4px]">ExtPrice</div>
                        <div class="h-[19px] pl-[4px]">GroupDiscountRate</div>
                        <div class="h-[19px] pl-[4px]">LastModifiedByScreenID</div>
                        <div class="h-[19px] pl-[4px]">LastModifiedDateTime</div>
                        <div class="h-[19px] pl-[4px]">Note Text</div>
                        <div class="h-[19px] pl-[4px]">NoteID</div>
                    </div>
                    <div class="relative w-[16px]">
                        <svg class="absolute left-[3px] top-[5px] h-[7px] w-[10px]" viewBox="0 0 10 7" fill="#8a8a8a"><path d="M5 0l5 7H0z"/></svg>
                        <div class="absolute left-[3px] top-[121px] h-[36px] w-[9px] rounded-full bg-[#8a8a8a]"></div>
                        <svg class="absolute bottom-[4px] left-[3px] h-[7px] w-[10px]" viewBox="0 0 10 7" fill="#8a8a8a"><path d="M0 0h10L5 7z"/></svg>
                    </div>
                </div>
            </div>
        </main>
    </div>

    <!-- status bar -->
    <footer class="flex h-[30px] shrink-0 items-center bg-[#0079cc] pl-[16px] text-[13px] font-bold text-white">
        <svg class="h-[17px] w-[16px]" viewBox="0 0 16 17" fill="none" stroke="#fff" stroke-width="1.300"><path d="M1 1h14v11.500h-3v3l-3-3H1z"/><path d="M4 4.500h8M4 7h8M4 9.500h5"/></svg>
        <span class="ml-[10px]">You are currently using a test tenant that is not intended for production use.</span>
    </footer>
</div>
</body>
</html>
